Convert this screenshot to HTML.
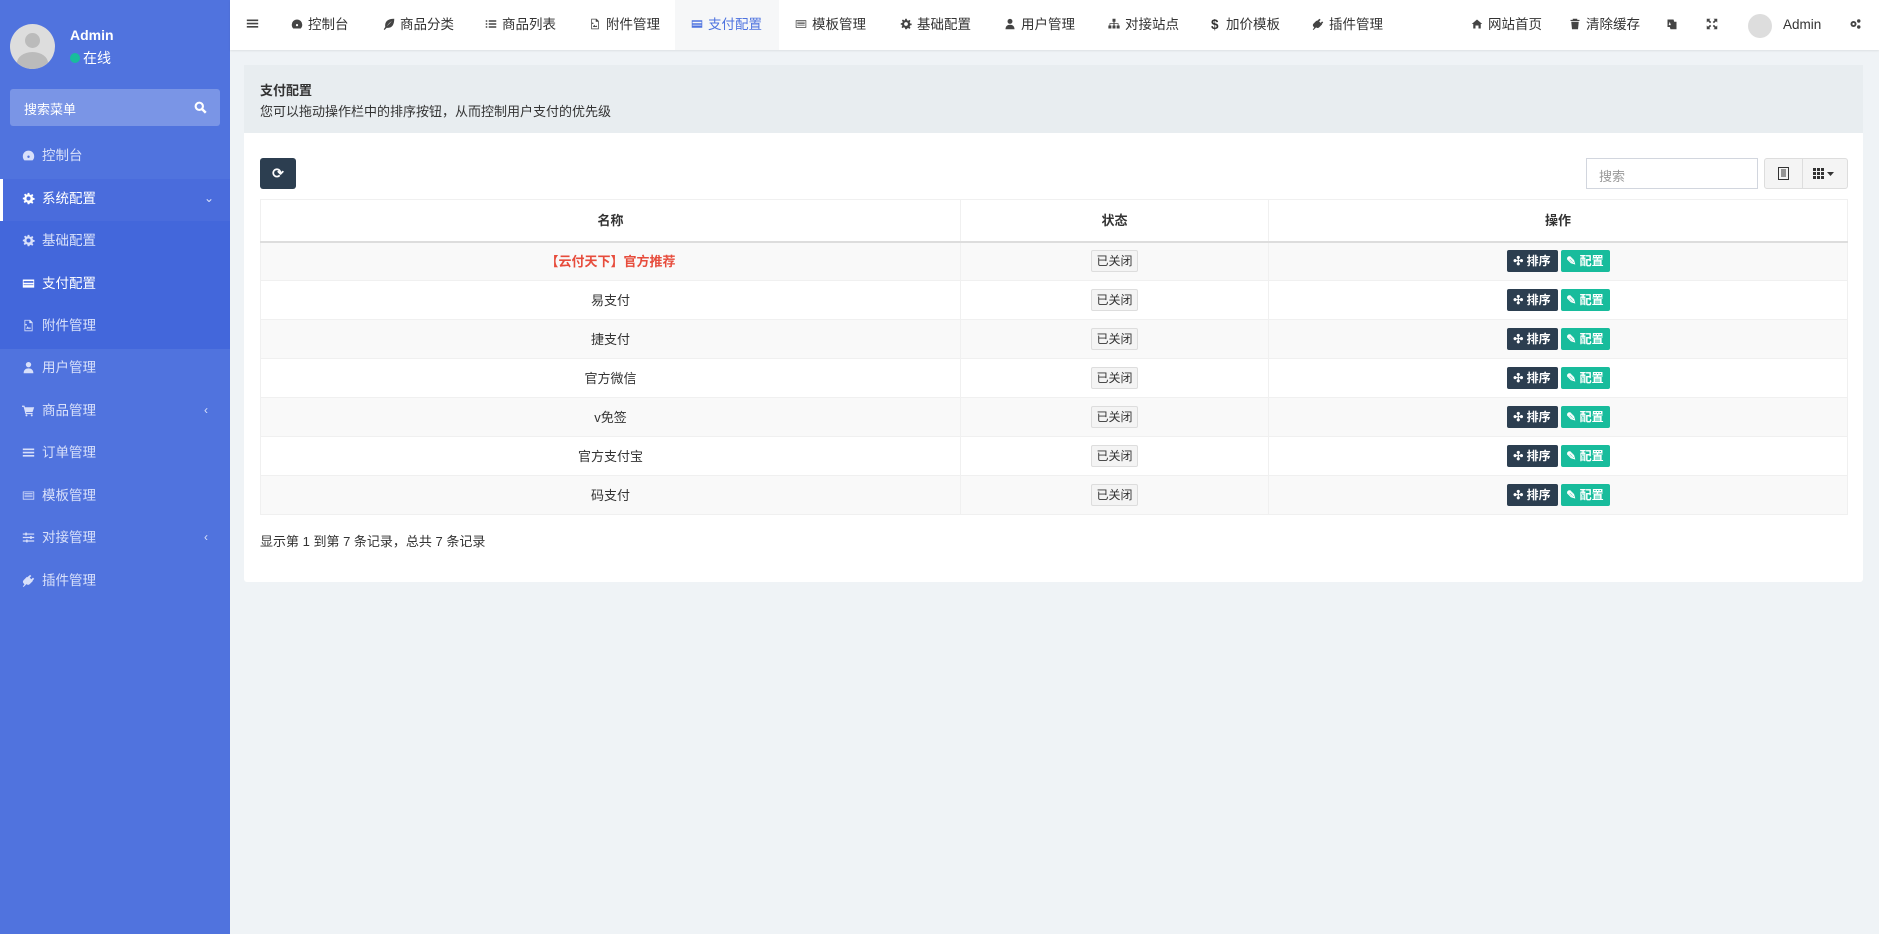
<!DOCTYPE html>
<html><head><meta charset="utf-8"><style>
*{box-sizing:border-box;margin:0;padding:0}
body{width:1879px;height:934px;overflow:hidden;background:#eff3f6;font-family:"Liberation Sans","Noto Sans CJK SC",sans-serif;font-size:14px;color:#333;position:relative}
.sb{position:absolute;left:0;top:0;width:230px;height:934px;background:#5073de}
.av{position:absolute;left:10px;top:24px;width:45px;height:45px;border-radius:50%;background:#ddd;overflow:hidden}
.av:before{content:"";position:absolute;left:15px;top:9px;width:15px;height:15px;border-radius:50%;background:#bbb}
.av:after{content:"";position:absolute;left:7px;top:28px;width:31px;height:22px;border-radius:50%;background:#bbb}
.nm{position:absolute;left:70px;top:27px;color:#fff;font-weight:bold;font-size:14px}
.on{position:absolute;left:70px;top:48px;color:#fff;font-size:14px}
.on i{display:inline-block;width:10px;height:10px;border-radius:50%;background:#18bc9c;margin-right:3px}
.srch{position:absolute;left:10px;top:89px;width:210px;height:37px;background:#7a95e6;border-radius:3px;color:#fff;font-size:13px;padding:10px 14px}
.srch svg{position:absolute;right:13px;top:12px}
.sub{position:absolute;left:0;top:221px;width:230px;height:128px;background:#4367db}
.act{position:absolute;left:0;top:179px;width:230px;height:42px;background:#4a6cdc;border-left:3px solid #fff}
.it{position:absolute;left:22px;color:#d8e0fa;font-size:13.5px;height:20px;line-height:20px}
.it svg{width:13px;height:13px;margin-right:7px;vertical-align:-2px;fill:#d8e0fa}
.it.w{color:#fff}.it.w svg{fill:#fff}
.arr{position:absolute;left:204px;color:#d8e0fa;font-size:12px}
.hd{position:absolute;left:230px;top:0;right:0;height:50px;background:#fff;box-shadow:0 1px 2px rgba(0,0,0,.08)}
.n{position:absolute;top:0;height:50px;line-height:50px;font-size:13.5px;color:#333;white-space:nowrap}
.n svg{width:12px;height:12px;margin-right:5px;vertical-align:-1px;fill:#444}
.box{position:absolute;left:244px;top:65px;width:1619px;height:517px;background:#fff;border-radius:3px}
.bh{height:68px;background:#e8edf0;padding:15px 16px;font-size:13px}
.bh b{display:block;margin-bottom:2px}
.rf{position:absolute;left:16px;top:93px;width:36px;height:31px;background:#2c3e50;border-radius:3px;color:#fff;text-align:center;line-height:31px;font-weight:bold}
.inp{position:absolute;left:1342px;top:93px;width:172px;height:31px;border:1px solid #d2d6de;color:#999;font-size:13px;padding:7px 12px}
.bg{position:absolute;left:1520px;top:93px;width:84px;height:31px;border:1px solid #ddd;background:#f4f4f4;border-radius:3px}
.bg i{position:absolute;left:37px;top:0;width:1px;height:29px;background:#ddd}
table{position:absolute;left:16px;top:134px;width:1588px;border-collapse:collapse;font-size:13px}
td,th{border:1px solid #f0f0f0;text-align:center;height:39px;padding:0;vertical-align:middle;line-height:1}
th{height:42px;border-bottom:2px solid #ddd}
tr:nth-child(even) td{background:#f9f9f9}
.st{display:inline-block;width:47px;height:22px;line-height:20px;border:1px solid #ddd;background:#f4f4f4;font-size:12px;border-radius:2px;vertical-align:middle}
.b1,.b2{display:inline-block;height:22px;line-height:22px;color:#fff;font-size:12px;font-weight:bold;border-radius:2px;vertical-align:middle}
.b1{width:51px;background:#2c3e50}.b2{width:49px;background:#18bc9c;margin-left:3px}
.ft{position:absolute;left:16px;top:466px;font-size:13px}
</style></head><body>
<svg width="0" height="0" style="position:absolute">
<defs>
<symbol id="dash" viewBox="0 0 16 16"><path d="M8 2a7 7 0 0 0-7 7c0 2 .8 3.7 2 5h10a7 7 0 0 0 2-5 7 7 0 0 0-7-7zm0 9a1.5 1.5 0 1 1 0-3 1.5 1.5 0 0 1 0 3z"/></symbol>
<symbol id="gear" viewBox="0 0 16 16"><path d="M7 1h2l.4 2 1.5.7 1.7-1.2 1.4 1.4-1.2 1.7.7 1.5 2 .4v2l-2 .4-.7 1.5 1.2 1.7-1.4 1.4-1.7-1.2-1.5.7L9 15H7l-.4-2-1.5-.7-1.7 1.2-1.4-1.4 1.2-1.7L2.5 9 1 9V7l2-.4.7-1.5-1.2-1.7 1.4-1.4 1.7 1.2L6.6 3zM8 5.5a2.5 2.5 0 1 0 0 5 2.5 2.5 0 0 0 0-5z"/></symbol>
<symbol id="card" viewBox="0 0 16 16"><path d="M1 3h14v10H1zm1 2v2h12V5zm0 4v1h12V9z" fill-rule="evenodd"/></symbol>
<symbol id="file" viewBox="0 0 16 16"><path d="M3 1h7l3 3v11H3zm1 1v12h8V5H9V2zm1 10l2-3 1.5 2 1.5-1 1 2zm1-5a1 1 0 1 0 0 .1z"/></symbol>
<symbol id="user" viewBox="0 0 16 16"><circle cx="8" cy="4.5" r="3.3"/><path d="M2 15c0-4 2.5-6 6-6s6 2 6 6z"/></symbol>
<symbol id="cart" viewBox="0 0 16 16"><path d="M0 2h3l.6 2H15l-2 6H5l.4 1H13v1.5H4.3L2 3.5H0z"/><circle cx="5.5" cy="14" r="1.2"/><circle cx="12" cy="14" r="1.2"/></symbol>
<symbol id="bars" viewBox="0 0 16 16"><path d="M1 3h14v2H1zm0 4h14v2H1zm0 4h14v2H1z"/></symbol>
<symbol id="list" viewBox="0 0 16 16"><path d="M1 3h2v2H1zm4 0h10v2H5zM1 7h2v2H1zm4 0h10v2H5zm-4 4h2v2H1zm4 0h10v2H5z"/></symbol>
<symbol id="tpl" viewBox="0 0 16 16"><path d="M1 3h14v10H1zm1 1v8h12V4zm1 1h10v1H3zm0 2h10v1H3zm0 2h10v1H3z" fill-rule="evenodd"/></symbol>
<symbol id="slid" viewBox="0 0 16 16"><path d="M1 3h14v1.5H1zm0 4.3h14v1.5H1zm0 4.2h14V13H1z"/><rect x="4" y="2" width="2" height="3.5"/><rect x="10" y="6.3" width="2" height="3.5"/><rect x="5" y="10.5" width="2" height="3.5"/></symbol>
<symbol id="plug" viewBox="0 0 16 16"><path d="M10 1l1.5 1.5-2 2 2 2 2-2L15 6l-2 2 .5.5-4 4a3 3 0 0 1-4 0L4 14l-2 2-1-1 2-2-1-1.5a3 3 0 0 1 0-4l4-4 .5.5z"/></symbol>
<symbol id="leaf" viewBox="0 0 16 16"><path d="M15 1C6 1 2 5 3 12L1 15l1 1 3-3c7 1 10-4 10-12zM5 11c2-3 4-5 7-7-2 2-4 4-7 7z"/></symbol>
<symbol id="site" viewBox="0 0 16 16"><path d="M6 1h4v4H8.7v2H14v3h1.5v4h-4v-4H13V8H8.7v2H10v4H6v-4h1.3V8H3v2h1.5v4h-4v-4H2V7h5.3V5H6z"/></symbol>
<symbol id="home" viewBox="0 0 16 16"><path d="M8 2l7 6h-2v6H10V10H6v4H3V8H1z"/></symbol>
<symbol id="trash" viewBox="0 0 16 16"><path d="M5 1h6v1.5h3V4H2V2.5h3zM3 5h10l-1 10H4z"/></symbol>
<symbol id="exp" viewBox="0 0 16 16"><path d="M1 1h5L4.3 2.7 7 5.4 5.4 7 2.7 4.3 1 6zm14 0v5l-1.7-1.7L10.6 7 9 5.4l2.7-2.7L10 1zM1 15v-5l1.7 1.7L5.4 9 7 10.6l-2.7 2.7L6 15zm14 0h-5l1.7-1.7L9 10.6 10.6 9l2.7 2.7L15 10z"/></symbol>
<symbol id="lang" viewBox="0 0 16 16"><path d="M2 2h8l1 3h3v10H6l-1-3H2zm1.5 7.5h3L5 5z" fill-rule="evenodd"/></symbol>
<symbol id="gears" viewBox="0 0 16 16"><circle cx="6" cy="8" r="4"/><circle cx="6" cy="8" r="1.5" fill="#fff"/><circle cx="13" cy="4" r="2.3"/><circle cx="13" cy="12" r="2.3"/></symbol>
</defs></svg>
<div class="sb">
<div class="av"></div><div class="nm">Admin</div><div class="on"><i></i>在线</div>
<div class="srch">搜索菜单<svg width="13" height="13" viewBox="0 0 16 16"><circle cx="6.5" cy="6.5" r="4.5" fill="none" stroke="#fff" stroke-width="2.6"/><path d="M10 10l4.5 4.5" stroke="#fff" stroke-width="3"/></svg></div>
<div class="it" style="top:146px"><svg><use href="#dash"/></svg>控制台</div>
<div class="act"></div>
<div class="it w" style="top:189px"><svg><use href="#gear"/></svg>系统配置</div><div class="arr" style="top:191px">⌄</div>
<div class="sub"></div>
<div class="it" style="top:231px"><svg><use href="#gear"/></svg>基础配置</div>
<div class="it w" style="top:274px"><svg><use href="#card"/></svg>支付配置</div>
<div class="it" style="top:316px"><svg><use href="#file"/></svg>附件管理</div>
<div class="it" style="top:358px"><svg><use href="#user"/></svg>用户管理</div>
<div class="it" style="top:401px"><svg><use href="#cart"/></svg>商品管理</div><div class="arr" style="top:403px">‹</div>
<div class="it" style="top:443px"><svg><use href="#bars"/></svg>订单管理</div>
<div class="it" style="top:486px"><svg><use href="#tpl"/></svg>模板管理</div>
<div class="it" style="top:528px"><svg><use href="#slid"/></svg>对接管理</div><div class="arr" style="top:530px">‹</div>
<div class="it" style="top:571px"><svg><use href="#plug"/></svg>插件管理</div>
</div>
<div class="hd">
<div class="n" style="left:16px"><svg style="width:13px;height:13px"><use href="#bars"/></svg></div>
<div class="n" style="left:61px"><svg><use href="#dash"/></svg>控制台</div>
<div class="n" style="left:153px"><svg><use href="#leaf"/></svg>商品分类</div>
<div class="n" style="left:255px"><svg><use href="#list"/></svg>商品列表</div>
<div class="n" style="left:359px"><svg><use href="#file"/></svg>附件管理</div>
<div class="n" style="left:445px;width:104px;background:#f6f7f8;color:#4e73df;padding-left:16px"><svg style="fill:#4e73df"><use href="#card"/></svg>支付配置</div>
<div class="n" style="left:565px"><svg><use href="#tpl"/></svg>模板管理</div>
<div class="n" style="left:670px"><svg><use href="#gear"/></svg>基础配置</div>
<div class="n" style="left:774px"><svg><use href="#user"/></svg>用户管理</div>
<div class="n" style="left:878px"><svg><use href="#site"/></svg>对接站点</div>
<div class="n" style="left:981px;font-weight:bold">$&nbsp; <span style="font-weight:normal">加价模板</span></div>
<div class="n" style="left:1082px"><svg><use href="#plug"/></svg>插件管理</div>
<div class="n" style="left:1241px"><svg><use href="#home"/></svg>网站首页</div>
<div class="n" style="left:1339px"><svg><use href="#trash"/></svg>清除缓存</div>
<div class="n" style="left:1436px"><svg><use href="#lang"/></svg></div>
<div class="n" style="left:1476px"><svg><use href="#exp"/></svg></div>
<div style="position:absolute;left:1518px;top:14px;width:24px;height:24px;border-radius:50%;background:#ddd"></div>
<div class="n" style="left:1553px">Admin</div>
<div class="n" style="left:1619px"><svg><use href="#gears"/></svg></div>
</div>
<div class="box">
<div class="bh"><b>支付配置</b>您可以拖动操作栏中的排序按钮，从而控制用户支付的优先级</div>
<div class="rf">⟳</div>
<div class="inp">搜索</div>
<div class="bg"><i></i>
<svg style="position:absolute;left:13px;top:8px" width="11" height="13" viewBox="0 0 11 13"><rect x="0.5" y="0.5" width="10" height="12" fill="none" stroke="#333"/><path d="M3 3h5M3 5h5M3 7h5M3 9h5" stroke="#333"/></svg>
<svg style="position:absolute;left:48px;top:9px" width="22" height="12" viewBox="0 0 22 12"><g fill="#333"><rect x="0" y="0" width="3" height="3"/><rect x="4" y="0" width="3" height="3"/><rect x="8" y="0" width="3" height="3"/><rect x="0" y="4" width="3" height="3"/><rect x="4" y="4" width="3" height="3"/><rect x="8" y="4" width="3" height="3"/><rect x="0" y="8" width="3" height="3"/><rect x="4" y="8" width="3" height="3"/><rect x="8" y="8" width="3" height="3"/><path d="M14 4h7l-3.5 4z"/></g></svg>
</div>
<table>
<tr><th style="width:700px">名称</th><th style="width:308px">状态</th><th>操作</th></tr>
<tr><td style="color:#e74c3c;font-weight:bold">【云付天下】官方推荐</td><td><span class="st">已关闭</span></td><td><span class="b1">✣ 排序</span><span class="b2">✎ 配置</span></td></tr>
<tr><td>易支付</td><td><span class="st">已关闭</span></td><td><span class="b1">✣ 排序</span><span class="b2">✎ 配置</span></td></tr>
<tr><td>捷支付</td><td><span class="st">已关闭</span></td><td><span class="b1">✣ 排序</span><span class="b2">✎ 配置</span></td></tr>
<tr><td>官方微信</td><td><span class="st">已关闭</span></td><td><span class="b1">✣ 排序</span><span class="b2">✎ 配置</span></td></tr>
<tr><td>v免签</td><td><span class="st">已关闭</span></td><td><span class="b1">✣ 排序</span><span class="b2">✎ 配置</span></td></tr>
<tr><td>官方支付宝</td><td><span class="st">已关闭</span></td><td><span class="b1">✣ 排序</span><span class="b2">✎ 配置</span></td></tr>
<tr><td>码支付</td><td><span class="st">已关闭</span></td><td><span class="b1">✣ 排序</span><span class="b2">✎ 配置</span></td></tr>
</table>
<div class="ft">显示第 1 到第 7 条记录，总共 7 条记录</div>
</div>
</body></html>
